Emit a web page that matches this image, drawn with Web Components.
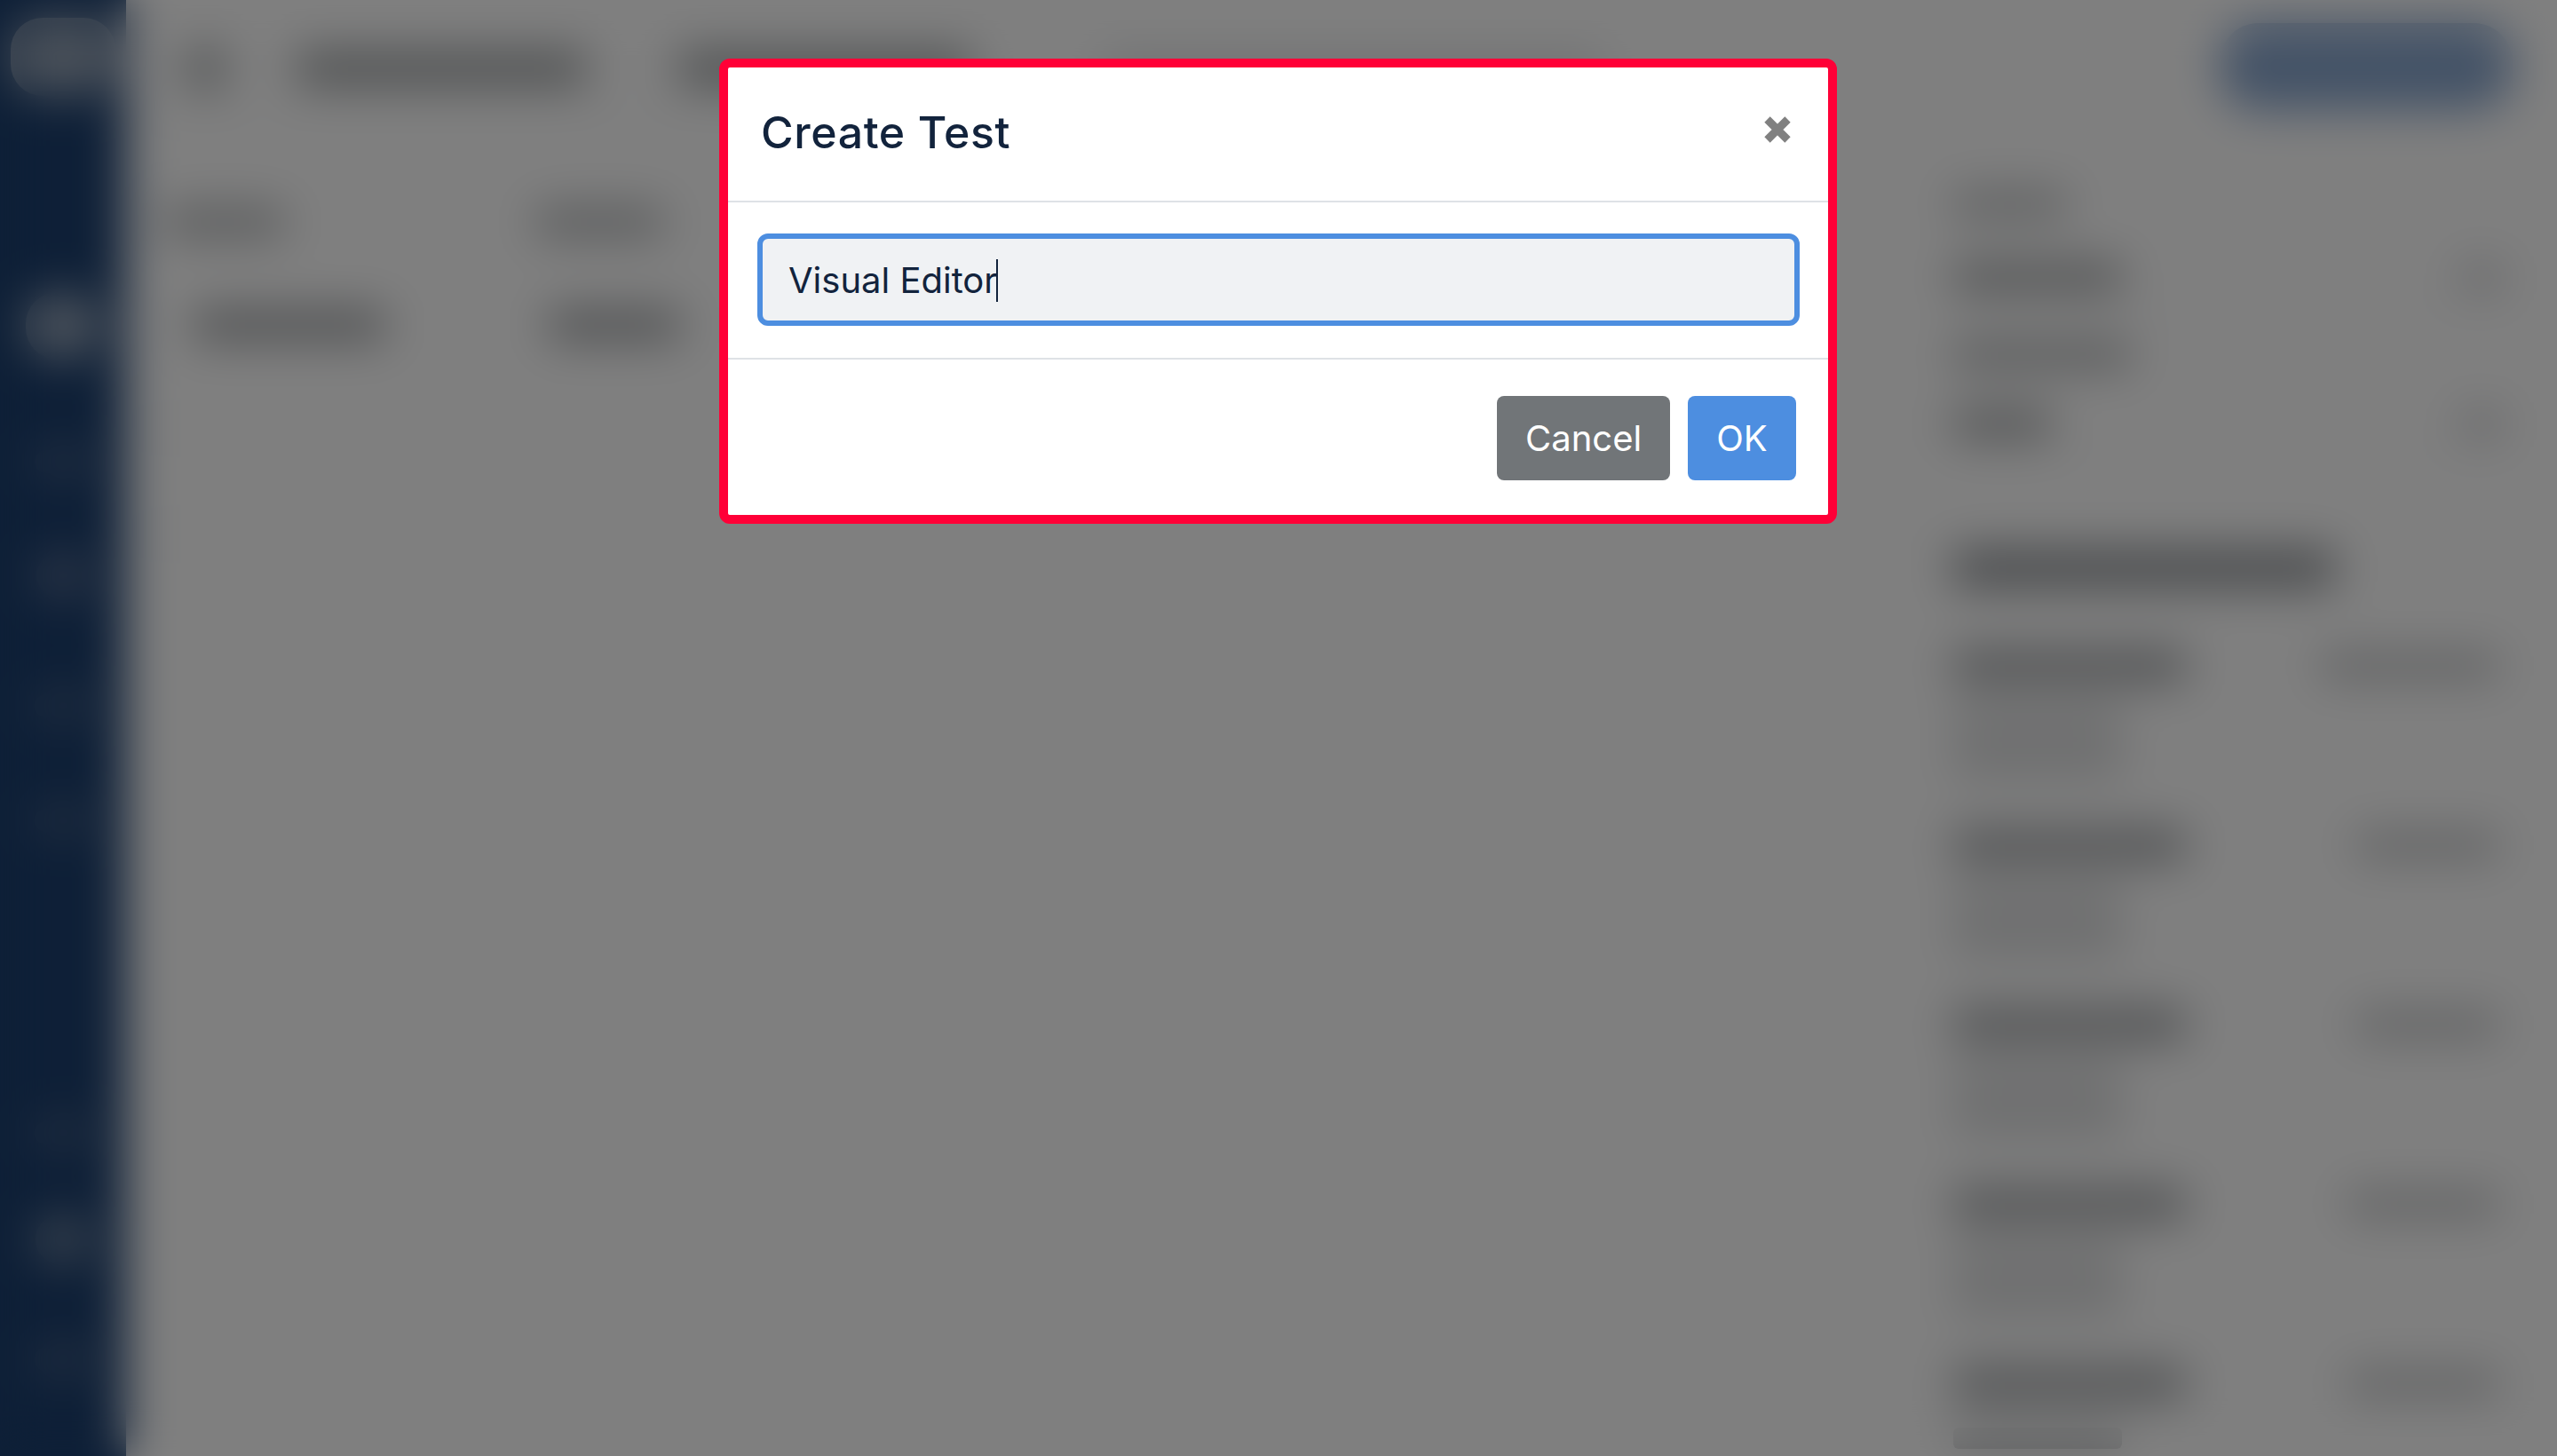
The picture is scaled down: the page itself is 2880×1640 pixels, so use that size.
<!DOCTYPE html>
<html>
<head>
<meta charset="utf-8">
<title>Create Test</title>
<style>
  html, body { margin: 0; height: 100%; background: #fff; overflow: hidden; }
</style>
</head>
<body>
<app-page>
  <side-nav slot="side"></side-nav>
  <work-area slot="main"></work-area>
  <info-panel slot="aside"></info-panel>
</app-page>
<modal-dialog heading="Create Test" value="Visual Editor"></modal-dialog>

<script>
class GhostBar extends HTMLElement {
  constructor() {
    super();
    this.attachShadow({mode: 'open'}).innerHTML = `
      <style>
        :host {
          display: block;
          flex: none;
          width: var(--w, 100px);
          height: var(--h, 30px);
          margin-top: var(--t, 0);
          background: var(--c, #4a4f52);
          border-radius: var(--r, 6px);
        }
      </style>`;
  }
}
customElements.define('ghost-bar', GhostBar);

class AppPage extends HTMLElement {
  constructor() {
    super();
    this.attachShadow({mode: 'open'}).innerHTML = `
      <style>
        :host {
          display: flex;
          width: 2880px;
          height: 1640px;
          background: #fff;
          overflow: hidden;
        }
        ::slotted([slot=side]) { flex: 0 0 142px; }
        ::slotted([slot=main]) { flex: 1 1 auto; }
        ::slotted([slot=aside]) { flex: 0 0 730px; }
      </style>
      <slot name="side"></slot>
      <slot name="main"></slot>
      <slot name="aside"></slot>`;
  }
}
customElements.define('app-page', AppPage);

class SideNav extends HTMLElement {
  constructor() {
    super();
    this.attachShadow({mode: 'open'}).innerHTML = `
      <style>
        :host {
          display: flex;
          flex-direction: column;
          align-items: center;
          background: #1c3f6e;
          box-sizing: border-box;
        }
        ghost-bar { --r: 36px; }
      </style>
      <ghost-bar style="--w:118px;--h:88px;--t:20px;--c:#94a2b4"></ghost-bar>
      <ghost-bar style="--w:84px;--h:76px;--t:221px;--c:#9aa8ba"></ghost-bar>
      <ghost-bar style="--w:64px;--h:26px;--t:102px;--c:#566c8e"></ghost-bar>
      <ghost-bar style="--w:60px;--h:50px;--t:90px;--c:#5e7192"></ghost-bar>
      <ghost-bar style="--w:64px;--h:26px;--t:109px;--c:#526888"></ghost-bar>
      <ghost-bar style="--w:64px;--h:26px;--t:103px;--c:#526888"></ghost-bar>
      <ghost-bar style="--w:64px;--h:26px;--t:326px;--c:#526888"></ghost-bar>
      <ghost-bar style="--w:62px;--h:56px;--t:79px;--c:#74879f"></ghost-bar>
      <ghost-bar style="--w:64px;--h:28px;--t:93px;--c:#526888"></ghost-bar>
    `;
  }
}
customElements.define('side-nav', SideNav);

class WorkArea extends HTMLElement {
  constructor() {
    super();
    this.attachShadow({mode: 'open'}).innerHTML = `
      <style>
        :host { display: block; box-sizing: border-box; }
        .top {
          display: flex;
          align-items: center;
          gap: 82px;
          height: 128px;
          padding: 28px 0 0 62px;
          box-sizing: border-box;
          border-bottom: 3px solid #eceef0;
        }
        .row {
          display: flex;
          align-items: center;
          box-sizing: border-box;
        }
        .head { height: 120px; padding: 0 0 0 44px; margin-top: 62px; }
        .body { height: 174px; padding: 0 0 60px 76px; border-bottom: 3px solid #e6e8ea; }
        .empty { height: 119px; border-bottom: 3px solid #e6e8ea; }
      </style>
      <div class="top">
        <ghost-bar style="--w:54px;--h:54px;--r:27px;--c:#aeb2b4"></ghost-bar>
        <ghost-bar style="--w:326px;--h:38px;--c:#989c9e;margin-left:-6px"></ghost-bar>
        <ghost-bar style="--w:330px;--h:38px;--c:#989c9e;margin-left:22px"></ghost-bar>
        <ghost-bar style="--w:560px;--h:28px;--c:#d8dadc;margin-left:68px"></ghost-bar>
      </div>
      <div class="row head">
        <ghost-bar style="--w:134px;--h:32px;--c:#aeb1b3"></ghost-bar>
        <ghost-bar style="--w:143px;--h:32px;--c:#aeb1b3;margin-left:284px"></ghost-bar>
      </div>
      <div class="row body">
        <ghost-bar style="--w:216px;--h:34px;--c:#9a9da0"></ghost-bar>
        <ghost-bar style="--w:148px;--h:34px;--c:#9a9da0;margin-left:184px"></ghost-bar>
      </div>
      <div class="row empty"></div>
    `;
  }
}
customElements.define('work-area', WorkArea);

class TestRow extends HTMLElement {
  constructor() {
    super();
    const date = this.getAttribute('date-w') || '180';
    this.attachShadow({mode: 'open'}).innerHTML = `
      <style>
        :host {
          display: block;
          height: 202px;
          box-sizing: border-box;
        }
        .line {
          display: flex;
          justify-content: space-between;
          align-items: center;
          padding-right: 16px;
        }
      </style>
      <div class="line">
        <ghost-bar style="--w:262px;--h:36px;--c:#9ea1a4"></ghost-bar>
        <ghost-bar style="--w:${date}px;--h:28px;--c:#bcbec0"></ghost-bar>
      </div>
      <ghost-bar style="--w:190px;--h:24px;--t:32px;--c:#c6c8ca"></ghost-bar>
      <ghost-bar style="--w:190px;--h:24px;--t:22px;--c:#c6c8ca"></ghost-bar>
    `;
  }
}
customElements.define('test-row', TestRow);

class InfoPanel extends HTMLElement {
  constructor() {
    super();
    this.attachShadow({mode: 'open'}).innerHTML = `
      <style>
        :host {
          display: block;
          box-sizing: border-box;
          padding: 26px 50px 0 50px;
        }
        .cta { display: flex; justify-content: flex-end; }
        .field {
          display: flex;
          justify-content: space-between;
          align-items: center;
          height: 72px;
          padding-right: 10px;
          border-bottom: 3px solid #eceef0;
        }
      </style>
      <div class="cta">
        <ghost-bar style="--w:330px;--h:98px;--r:44px;--c:#88a6ce"></ghost-bar>
      </div>
      <ghost-bar style="--w:128px;--h:28px;--t:92px;--c:#b4b7b9"></ghost-bar>
      <div class="field" style="margin-top:32px">
        <ghost-bar style="--w:190px;--h:32px;--c:#a0a3a5"></ghost-bar>
        <ghost-bar style="--w:50px;--h:30px;--c:#cccdd0"></ghost-bar>
      </div>
      <ghost-bar style="--w:200px;--h:28px;--t:34px;--c:#a8abad"></ghost-bar>
      <div class="field" style="margin-top:28px">
        <ghost-bar style="--w:110px;--h:32px;--c:#a0a3a5"></ghost-bar>
        <ghost-bar style="--w:50px;--h:30px;--c:#cccdd0"></ghost-bar>
      </div>
      <ghost-bar style="--w:430px;--h:42px;--t:103px;--c:#8e9296"></ghost-bar>
      <div style="margin-top:71px">
        <test-row date-w="200"></test-row>
        <test-row date-w="160"></test-row>
        <test-row date-w="160"></test-row>
        <test-row date-w="170"></test-row>
        <test-row date-w="170"></test-row>
      </div>
    `;
  }
}
customElements.define('info-panel', InfoPanel);

class ModalDialog extends HTMLElement {
  constructor() {
    super();
    const heading = this.getAttribute('heading');
    const value = this.getAttribute('value');
    this.attachShadow({mode: 'open'}).innerHTML = `
      <style>
        :host {
          position: fixed;
          inset: 0;
          display: flex;
          justify-content: center;
          align-items: flex-start;
          padding: 66px 1px 0 0;
          box-sizing: border-box;
          background: rgba(0, 0, 0, .5);
          backdrop-filter: blur(26px);
          font-family: Inter, "Liberation Sans", sans-serif;
          color: #12233c;
        }
        .box {
          width: 1259px;
          box-sizing: border-box;
          background: #fff;
          border: 10px solid #ff0037;
          border-radius: 12px;
        }
        header {
          height: 150px;
          display: flex;
          align-items: center;
          justify-content: space-between;
          padding: 0 42px 0 37px;
          box-sizing: border-box;
        }
        h1 { margin: 0 0 4px; font-size: 50px; font-weight: 450; line-height: 1.2; letter-spacing: .6px; }
        .close { display: block; width: 30px; height: 30px; margin-top: -11px; }
        .body {
          padding: 35px 32px 36px 33px;
          border-top: 2px solid #dee2e6;
          border-bottom: 2px solid #dee2e6;
        }
        .input {
          display: flex;
          align-items: center;
          height: 104px;
          box-sizing: border-box;
          padding: 2px 29px 0;
          background: #f0f2f4;
          border: 6px solid #4d8ee0;
          border-radius: 12px;
          font-size: 40px;
          line-height: 48px;
        }
        .caret { width: 2px; height: 48px; background: #12233c; margin-left: -1px; }
        footer {
          display: flex;
          justify-content: flex-end;
          gap: 20px;
          padding: 41px 36px 39px 0;
        }
        button {
          height: 95px;
          border: 0;
          border-radius: 8px;
          padding: 0 32px;
          color: #fff;
          font: 400 40px Inter, "Liberation Sans", sans-serif;
        }
        .cancel { width: 195px; background: #717578; }
        .ok { width: 122px; background: #4d8ee0; }
      </style>
      <div class="box">
        <header>
          <h1>${heading}</h1>
          <svg class="close" viewBox="0 0 30 30"><path d="M3.5 3.5l23 23M26.5 3.5l-23 23" stroke="#808080" stroke-width="9" fill="none"/></svg>
        </header>
        <div class="body">
          <div class="input"><span>${value}</span><i class="caret"></i></div>
        </div>
        <footer>
          <button class="cancel">Cancel</button>
          <button class="ok">OK</button>
        </footer>
      </div>`;
  }
}
customElements.define('modal-dialog', ModalDialog);
</script>
</body>
</html>
